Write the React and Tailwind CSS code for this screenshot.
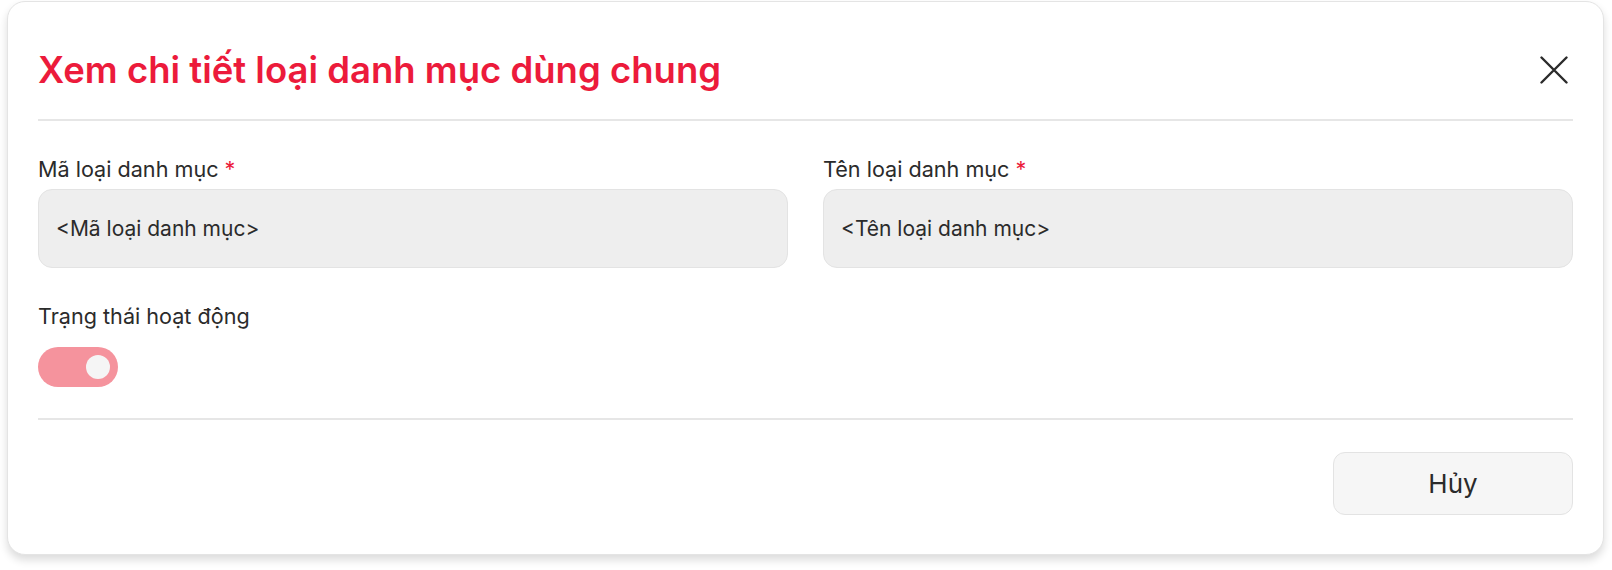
import React from "react";

export default function App() {
  const font = { fontFamily: "Inter, 'Noto Sans', sans-serif" };
  return (
    <div className="w-full h-[570px] bg-white pt-[1px] pl-[7px]" style={font}>
      <div className="w-[1597px] h-[554px] bg-white rounded-[18px] border border-[#e4e4e4] shadow-[0_5px_8px_rgba(0,0,0,0.14)] px-[30px] flex flex-col">
        <div className="h-[117px] pt-[18px] flex items-center justify-between">
          <h1 className="text-[36.5px] leading-[44px] font-semibold text-[#ec1b3b]">
            Xem chi tiết loại danh mục dùng chung
          </h1>
          <button className="w-[32px] h-[32px] flex items-center justify-center mr-[3px] text-[#2b2b2b]">
            <svg width="28" height="28" viewBox="0 0 28 28" fill="none" stroke="currentColor" strokeWidth="2.4" strokeLinecap="round">
              <path d="M1.5 1.5 L26.5 26.5 M26.5 1.5 L1.5 26.5" />
            </svg>
          </button>
        </div>
        <div className="h-[2px] bg-[#e6e6e6]" />
        <div className="pt-[34px] grid grid-cols-2 gap-x-[35px]">
          <div className="flex flex-col">
            <label className="text-[21.6px] leading-[28px] text-[#2b2b2b]">
              Mã loại danh mục <span className="text-[#ec1b3b]">*</span>
            </label>
            <div className="mt-[6px] h-[79px] rounded-[14px] bg-[#eeeeee] border border-[#e3e3e3] flex items-center px-[17px] text-[21px] text-[#2b2b2b]">
              &lt;Mã loại danh mục&gt;
            </div>
          </div>
          <div className="flex flex-col">
            <label className="text-[21.6px] leading-[28px] text-[#2b2b2b]">
              Tên loại danh mục <span className="text-[#ec1b3b]">*</span>
            </label>
            <div className="mt-[6px] h-[79px] rounded-[14px] bg-[#eeeeee] border border-[#e3e3e3] flex items-center px-[17px] text-[21px] text-[#2b2b2b]">
              &lt;Tên loại danh mục&gt;
            </div>
          </div>
        </div>
        <div className="pt-[34px] text-[21.6px] leading-[28px] text-[#2b2b2b]">
          Trạng thái hoạt động
        </div>
        <div className="pt-[17px]">
          <div className="w-[80px] h-[40px] rounded-full bg-[#f5939d] flex items-center justify-end pr-[8px]">
            <div className="w-[24px] h-[24px] rounded-full bg-[#f5f5f5]" />
          </div>
        </div>
        <div className="mt-[31px] h-[2px] bg-[#e6e6e6]" />
        <div className="pt-[32px] flex justify-end">
          <button className="w-[240px] h-[63px] rounded-[12px] bg-[#f6f6f6] border border-[#e3e3e3] text-[26px] text-[#2b2b2b]">
            Hủy
          </button>
        </div>
      </div>
    </div>
  );
}
